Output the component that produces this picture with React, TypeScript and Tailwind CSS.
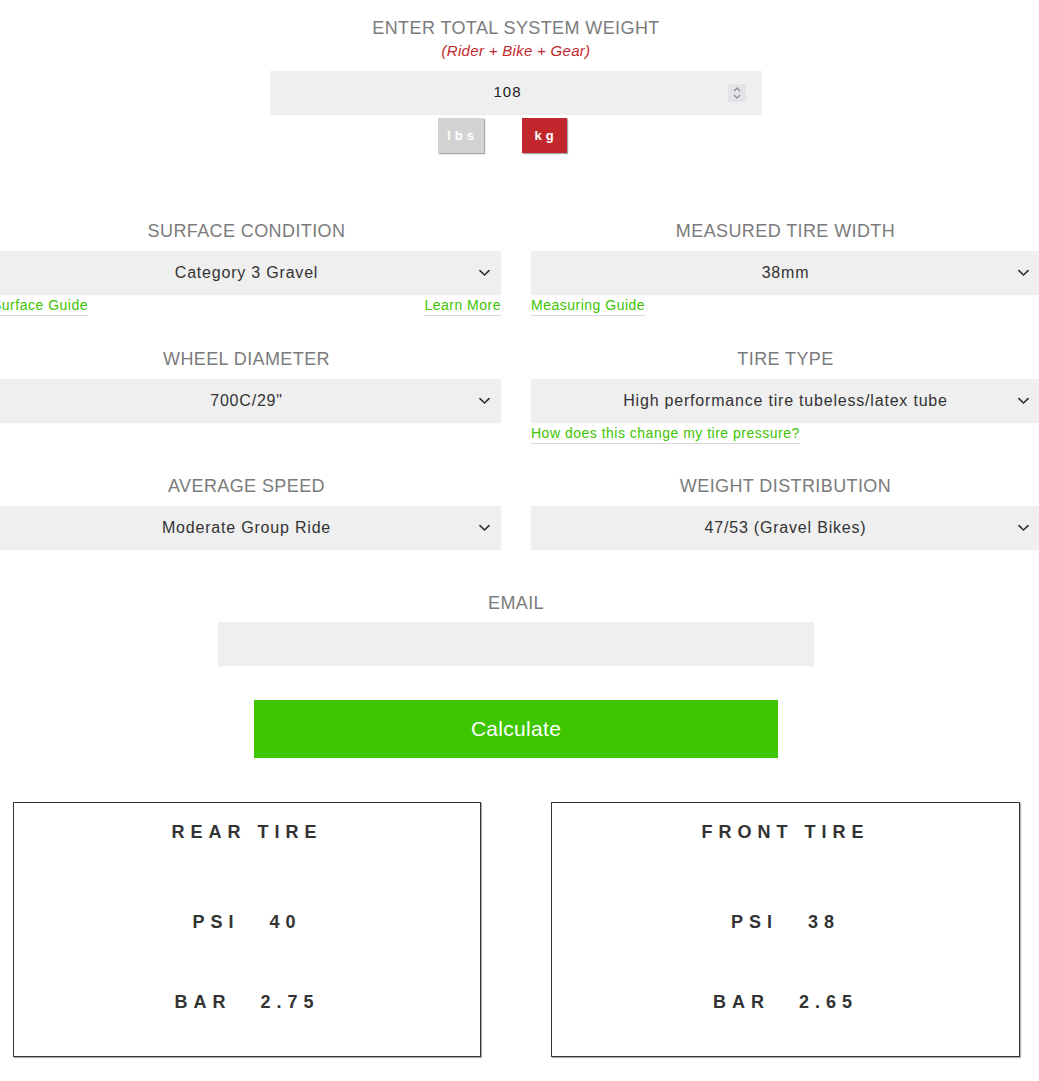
import React from "react";

const FONT = { fontFamily: '"Liberation Sans", Arial, Helvetica, sans-serif' };

function Chevron() {
  return (
    <svg width="11" height="7" viewBox="0 0 11 7" className="absolute right-[11px] top-1/2 -translate-y-1/2">
      <path d="M1 1.2 L5.5 5.5 L10 1.2" fill="none" stroke="#333" strokeWidth="1.7" strokeLinecap="round" strokeLinejoin="round" />
    </svg>
  );
}

function Select({ value }: { value: string }) {
  return (
    <div className="relative flex h-[43px] items-center justify-center bg-[#efefef] shadow-[0_1px_1px_rgba(0,0,0,0.07)]">
      <span className="text-[16px] tracking-[0.8px] text-[#333]">{value}</span>
      <Chevron />
    </div>
  );
}

function Label({ children }: { children: React.ReactNode }) {
  return (
    <div className="h-[22px] text-center text-[18px] leading-[24px] tracking-[0.4px] text-[#7b7b7b]">{children}</div>
  );
}

function GLink({ children }: { children: React.ReactNode }) {
  return (
    <span className="border-b border-[#d8d8d8] text-[14px] leading-[19px] tracking-[0.5px] text-[#3ec400]">{children}</span>
  );
}

function Field({
  label,
  value,
  links,
  linkH = "",
}: {
  label: string;
  value: string;
  links?: React.ReactNode;
  linkH?: string;
}) {
  return (
    <div className="flex flex-col">
      <Label>{label}</Label>
      <div className="mt-[10px]">
        <Select value={value} />
      </div>
      {linkH && <div className={`mt-[2px] flex items-start justify-between ${linkH}`}>{links}</div>}
    </div>
  );
}

function ResultBox({ title, psi, bar, pad }: { title: string; psi: string; bar: string; pad: string }) {
  return (
    <div className={pad}>
      <div className="flex h-[255px] flex-col items-center border border-[#333] pt-[18px] font-bold text-[#333] shadow-[1px_1px_1px_rgba(0,0,0,0.3)]">
        <div className="h-[22px] text-[18px] leading-[22px] tracking-[6px]">{title}</div>
        <div className="mt-[68px] h-[22px] text-[18px] leading-[22px] tracking-[6px]">
          <span>PSI</span>
          <span className="ml-[30px]">{psi}</span>
        </div>
        <div className="mt-[58px] h-[22px] text-[18px] leading-[22px] tracking-[6px]">
          <span>BAR</span>
          <span className="ml-[29px]">{bar}</span>
        </div>
      </div>
    </div>
  );
}

export default function App() {
  return (
    <div className="min-h-[1081px] w-full overflow-hidden bg-white" style={FONT}>
      <div className="ml-[-8px] w-[1048px]">
        {/* Weight */}
        <div className="flex flex-col items-center pt-[17px]">
          <div className="h-[22px] text-[18px] leading-[22px] tracking-[0.4px] text-[#7b7b7b]">ENTER TOTAL SYSTEM WEIGHT</div>
          <div className="mt-[3px] h-[18px] text-[15px] italic leading-[18px] tracking-[0.3px] text-[#c1272d]">(Rider + Bike + Gear)</div>
          <div className="relative mt-[11px] flex h-[43px] w-[492px] items-center justify-center bg-[#efefef] pr-[17px] shadow-[0_1px_1px_rgba(0,0,0,0.07)]">
            <span className="text-[15px] tracking-[1px] text-[#222]">108</span>
            <div className="absolute right-[16px] top-1/2 flex h-[18px] w-[18px] -translate-y-1/2 flex-col items-center justify-center gap-[2px] bg-[#e3e3e8]">
              <svg width="8" height="5" viewBox="0 0 8 5">
                <path d="M1 4 L4 1 L7 4" fill="none" stroke="#8a8a8a" strokeWidth="1.1" />
              </svg>
              <svg width="8" height="5" viewBox="0 0 8 5">
                <path d="M1 1 L4 4 L7 1" fill="none" stroke="#8a8a8a" strokeWidth="1.1" />
              </svg>
            </div>
          </div>
          <div className="mt-[4px] flex gap-[38px] pr-[28px]">
            <div className="flex h-[35px] w-[46px] items-center justify-center bg-[#d3d3d3] pl-[4px] text-[13px] font-bold tracking-[4px] text-white shadow-[1px_1px_1px_rgba(0,0,0,0.35)]">
              lbs
            </div>
            <div className="flex h-[35px] w-[45px] items-center justify-center bg-[#c1272d] pl-[4px] text-[13px] font-bold tracking-[4px] text-white shadow-[1px_1px_1px_rgba(0,0,0,0.35)]">
              kg
            </div>
          </div>
        </div>

        {/* Options grid */}
        <div className="mt-[66px] grid grid-cols-2 gap-x-[30px] gap-y-[30px]">
          <Field
            label="SURFACE CONDITION"
            value="Category 3 Gravel"
            linkH="h-[21px]"
            links={
              <>
                <GLink>Surface Guide</GLink>
                <GLink>Learn More</GLink>
              </>
            }
          />
          <Field label="MEASURED TIRE WIDTH" value="38mm" linkH="h-[21px]" links={<GLink>Measuring Guide</GLink>} />
          <Field label="WHEEL DIAMETER" value={'700C/29"'} linkH="h-[20px]" />
          <Field
            label="TIRE TYPE"
            value="High performance tire tubeless/latex tube"
            linkH="h-[20px]"
            links={<GLink>How does this change my tire pressure?</GLink>}
          />
          <Field label="AVERAGE SPEED" value="Moderate Group Ride" />
          <Field label="WEIGHT DISTRIBUTION" value="47/53 (Gravel Bikes)" />
        </div>

        {/* Email */}
        <div className="mt-[42px] flex flex-col items-center">
          <Label>EMAIL</Label>
          <div className="mt-[9px] h-[43px] w-[596px] bg-[#efefef] shadow-[0_1px_1px_rgba(0,0,0,0.07)]" />
          <button className="mt-[35px] flex h-[58px] w-[524px] items-center justify-center bg-[#3ec600] text-[21px] tracking-[0.3px] text-white">
            Calculate
          </button>
        </div>

        {/* Results */}
        <div className="mt-[44px] grid grid-cols-2 gap-x-[30px]">
          <ResultBox title="REAR TIRE" psi="40" bar="2.75" pad="pl-[21px] pr-[20px]" />
          <ResultBox title="FRONT TIRE" psi="38" bar="2.65" pad="pl-[20px] pr-[20px]" />
        </div>
      </div>
    </div>
  );
}
